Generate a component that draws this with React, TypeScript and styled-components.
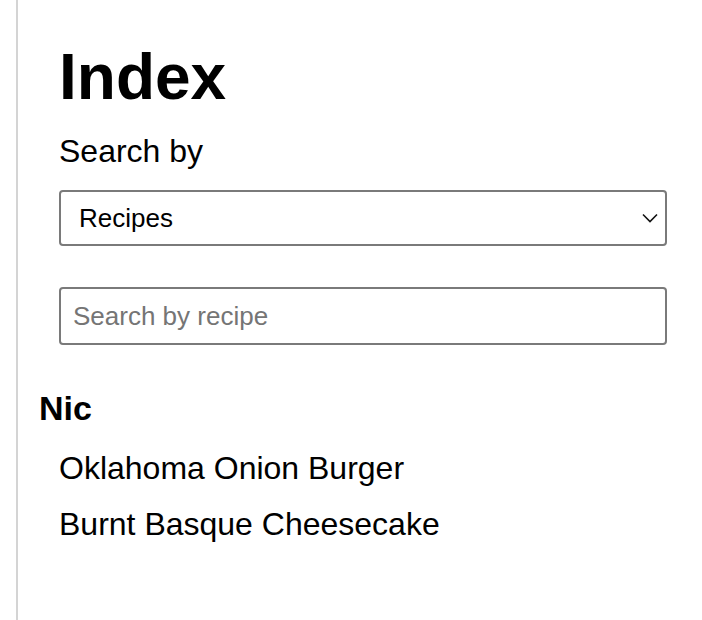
import React from "react";
import styled, { createGlobalStyle } from "styled-components";

const GlobalStyle = createGlobalStyle`
  html, body {
    margin: 0;
    padding: 0;
    background: #ffffff;
    font-family: "Liberation Sans", Arial, Helvetica, sans-serif;
    color: #000000;
  }
  * { box-sizing: border-box; }
`;

const Page = styled.div`
  display: flex;
  min-height: 620px;
  padding-left: 16px;
`;

const Sidebar = styled.aside`
  flex: 1;
  display: flex;
  flex-direction: column;
  border-left: 2px solid #d4d4d4;
  padding: 41px 35px 0 21px;
`;

const SearchPanel = styled.section`
  display: flex;
  flex-direction: column;
  padding-left: 20px;
`;

const Title = styled.h1`
  margin: 0;
  font-size: 64px;
  line-height: 72px;
  font-weight: 700;
`;

const Label = styled.label`
  margin-top: 18px;
  font-size: 32px;
  line-height: 40px;
`;

const SelectWrap = styled.div`
  position: relative;
  margin-top: 19px;
  height: 56px;
`;

const Select = styled.select`
  appearance: none;
  -webkit-appearance: none;
  width: 100%;
  height: 100%;
  border: 2px solid #7a7a7a;
  border-radius: 4px;
  background: #ffffff;
  padding: 0 40px 0 18px;
  font-family: inherit;
  font-size: 26px;
  color: #000000;
`;

const Chevron = styled.svg`
  position: absolute;
  right: 9px;
  top: 23px;
  width: 16px;
  height: 10px;
  pointer-events: none;
`;

const SearchInput = styled.input`
  margin-top: 41px;
  width: 100%;
  height: 58px;
  border: 2px solid #7a7a7a;
  border-radius: 4px;
  padding: 0 12px;
  font-family: inherit;
  font-size: 26px;
  color: #000000;
  &::placeholder {
    color: #757575;
  }
`;

const Group = styled.section`
  margin-top: 46px;
  display: flex;
  flex-direction: column;
`;

const GroupName = styled.h3`
  margin: 0;
  font-size: 34px;
  line-height: 34px;
  font-weight: 700;
`;

const RecipeList = styled.ul`
  list-style: none;
  margin: 23px 0 0;
  padding: 0 0 0 20px;
  display: flex;
  flex-direction: column;
  gap: 16px;
`;

const RecipeItem = styled.li`
  font-size: 32px;
  line-height: 40px;
`;

const groups = [
  { name: "Nic", recipes: ["Oklahoma Onion Burger", "Burnt Basque Cheesecake"] },
];

export default function App() {
  return (
    <>
      <GlobalStyle />
      <Page>
        <Sidebar>
          <SearchPanel>
            <Title>Index</Title>
            <Label htmlFor="search-by">Search by</Label>
            <SelectWrap>
              <Select id="search-by" defaultValue="recipes">
                <option value="recipes">Recipes</option>
                <option value="people">People</option>
              </Select>
              <Chevron viewBox="0 0 16 10" fill="none">
                <path d="M1 1.5 L8 8.5 L15 1.5" stroke="#111" strokeWidth="1.6" />
              </Chevron>
            </SelectWrap>
            <SearchInput placeholder="Search by recipe" />
          </SearchPanel>
          {groups.map((g) => (
            <Group key={g.name}>
              <GroupName>{g.name}</GroupName>
              <RecipeList>
                {g.recipes.map((r) => (
                  <RecipeItem key={r}>{r}</RecipeItem>
                ))}
              </RecipeList>
            </Group>
          ))}
        </Sidebar>
      </Page>
    </>
  );
}
